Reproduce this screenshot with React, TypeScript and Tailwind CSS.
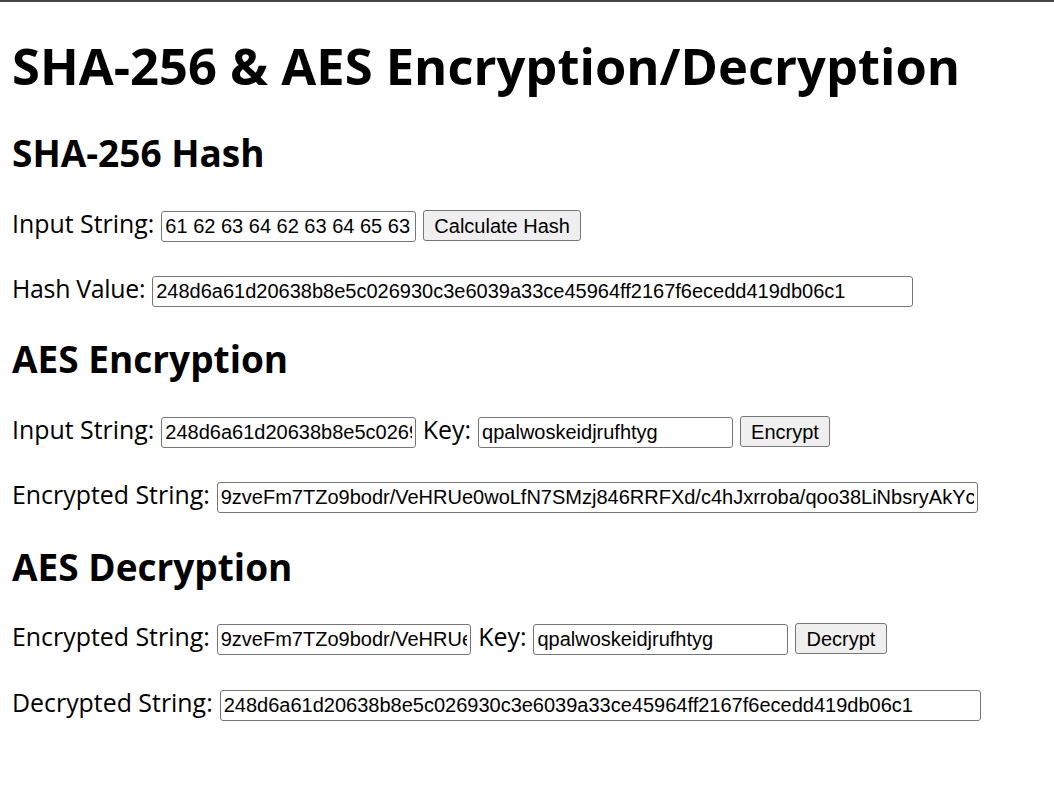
import React from 'react';

const HASH = '248d6a61d20638b8e5c026930c3e6039a33ce45964ff2167f6ecedd419db06c1';
const INPUT_HEX =
  '61 62 63 64 62 63 64 65 63 64 65 66 64 65 66 67 65 66 67 68 66 67 68 69 67 68 69 6a 68 69 6a 6b 69 6a 6b 6c 6a 6b 6c 6d 6b 6c 6d 6e 6c 6d 6e 6f 6d 6e 6f 70 6e 6f 70 71';
const KEY = 'qpalwoskeidjrufhtyg';
const ENCRYPTED =
  '9zveFm7TZo9bodr/VeHRUe0woLfN7SMzj846RRFXd/c4hJxrroba/qoo38LiNbsryAkYcQ3xR2lT8vPz0mWkLs9uYbGq1NdT4HwZ0=';

const Field: React.FC<{ value: string; wide?: boolean }> = ({ value, wide }) => (
  <input
    type="text"
    readOnly
    value={value}
    className={
      wide
        ? 'h-[31px] w-[761px] rounded-[3px] border border-[#767676] bg-white px-[3px] text-[20px] text-black outline-none font-["Liberation_Sans",Arial,sans-serif]'
        : 'h-[31px] w-[254.5px] rounded-[3px] border border-[#767676] bg-white px-[3px] text-[20px] text-black outline-none font-["Liberation_Sans",Arial,sans-serif]'
    }
  />
);

const Button: React.FC<{ children: React.ReactNode }> = ({ children }) => (
  <button className='h-[31px] rounded-[3px] border border-[#767676] bg-[#efefef] px-[10.5px] text-[20px] text-black font-["Liberation_Sans",Arial,sans-serif] hover:bg-[#e5e5e5]'>
    {children}
  </button>
);

const Row: React.FC<{ className: string; children: React.ReactNode }> = ({ className, children }) => (
  <div className={`flex h-[31px] items-baseline gap-[7px] ${className}`}>{children}</div>
);

const Label: React.FC<{ children: React.ReactNode; tight?: boolean }> = ({ children, tight }) => (
  <span
    className={
      tight
        ? 'whitespace-nowrap text-[24.9px] leading-[20px] tracking-[-0.3px]'
        : 'whitespace-nowrap text-[24.9px] leading-[20px]'
    }
  >
    {children}
  </span>
);

export default function App() {
  return (
    <div className='min-h-screen bg-white text-black font-["Open_Sans","Noto_Sans",sans-serif]'>
      <div className="h-[2px] bg-[#474747]" />
      <div className="px-[12px]">
        <h1 className="mt-[32px] h-[64px] whitespace-nowrap text-[50.7px] leading-[64px] font-bold">
          SHA-256 &amp; AES Encryption/Decryption
        </h1>

        {/* SHA-256 */}
        <h2 className="mt-[31px] h-[48px] text-[37px] leading-[48px] font-bold">SHA-256 Hash</h2>
        <Row className="mt-[33px]">
          <Label>Input String:</Label>
          <Field value={INPUT_HEX} />
          <Button>Calculate Hash</Button>
        </Row>
        <Row className="mt-[35px]">
          <Label tight>Hash Value:</Label>
          <Field value={HASH} wide />
        </Row>

        {/* AES encrypt */}
        <h2 className="mt-[28px] h-[48px] text-[37px] leading-[48px] font-bold">AES Encryption</h2>
        <Row className="mt-[33px]">
          <Label>Input String:</Label>
          <Field value={HASH} />
          <Label>Key:</Label>
          <Field value={KEY} />
          <Button>Encrypt</Button>
        </Row>
        <Row className="mt-[35px]">
          <Label>Encrypted String:</Label>
          <Field value={ENCRYPTED} wide />
        </Row>

        {/* AES decrypt */}
        <h2 className="mt-[30px] h-[48px] text-[37px] leading-[48px] font-bold">AES Decryption</h2>
        <Row className="mt-[32px]">
          <Label>Encrypted String:</Label>
          <Field value={ENCRYPTED} />
          <Label>Key:</Label>
          <Field value={KEY} />
          <Button>Decrypt</Button>
        </Row>
        <Row className="mt-[36px]">
          <Label>Decrypted String:</Label>
          <Field value={HASH} wide />
        </Row>
      </div>
    </div>
  );
}
